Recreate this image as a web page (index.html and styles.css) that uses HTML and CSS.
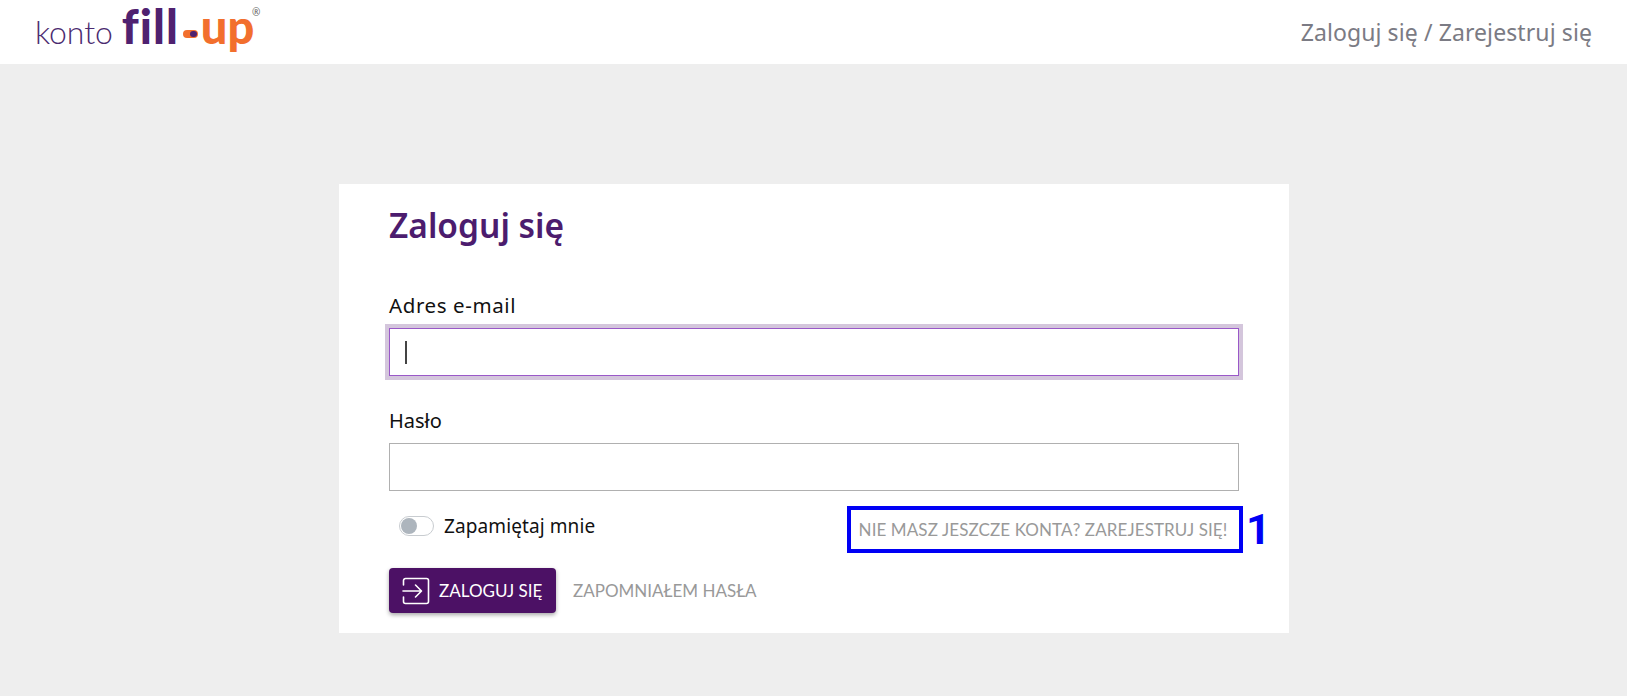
FILE: index.html
```html
<!DOCTYPE html>
<html lang="pl">
<head>
<meta charset="utf-8">
<title>Zaloguj się</title>
<link rel="stylesheet" href="styles.css">
</head>
<body>
<header class="topbar">
  <a class="logo">
    <span class="logo-konto">konto</span>
    <span class="logo-fill">fill</span>
    <span class="logo-dash"><i class="logo-dot"></i></span>
    <span class="logo-up">up</span>
    <span class="logo-reg">®</span>
  </a>
  <a class="top-link">Zaloguj się / Zarejestruj się</a>
</header>
<main class="page">
  <section class="card">
    <h1 class="title">Zaloguj się</h1>
    <label class="label label-email">Adres e-mail</label>
    <div class="input input-focus"><span class="caret"></span></div>
    <label class="label label-second">Hasło</label>
    <div class="input input-second"></div>
    <div class="row-remember">
      <div class="remember">
        <span class="toggle"><span class="knob"></span></span>
        <span class="remember-text">Zapamiętaj mnie</span>
      </div>
      <div class="register-wrap">
        <a class="register">NIE MASZ JESZCZE KONTA? ZAREJESTRUJ SIĘ!</a>
        <span class="marker">1</span>
      </div>
    </div>
    <div class="row-actions">
      <button class="btn">
        <svg class="btn-icon" viewBox="0 0 28 28" fill="none" stroke="#fff" stroke-width="1.6" stroke-linecap="round" stroke-linejoin="round">
          <path d="M1.5 8V3.5a2 2 0 0 1 2-2h21a2 2 0 0 1 2 2v21a2 2 0 0 1-2 2h-21a2 2 0 0 1-2-2V20"/>
          <path d="M1 14h18M13.5 8l6 6-6 6"/>
        </svg>
        <span>ZALOGUJ SIĘ</span>
      </button>
      <a class="forgot">ZAPOMNIAŁEM HASŁA</a>
    </div>
  </section>
</main>
</body>
</html>
```
FILE: styles.css
```css
* { box-sizing: border-box; }
html, body { margin: 0; height: 100%; }
body { background: #eee; font-family: "Noto Sans", "Open Sans", sans-serif; color: #111; overflow: hidden; }
.topbar { height: 64px; background: #fff; display: flex; align-items: center; justify-content: space-between; padding: 0 35px 0 35px; }
.logo { display: flex; align-items: baseline; position: relative; height: 64px; padding-top: 6px; font-variant-ligatures: none; }
.logo-konto { font-family: "Lato", sans-serif; font-weight: 300; font-size: 32px; letter-spacing: -0.1px; color: #4b2a70; margin-right: 9px; }
.logo-fill { font-family: "Lato", sans-serif; font-weight: 900; font-size: 47px; line-height: 40px; color: #4f2170; letter-spacing: 1px; }
.logo-dash { display: inline-block; width: 15px; height: 8px; border-radius: 4px; background: #f26f2d; margin: 0 3px 0 4px; align-self: center; position: relative; top: -1px; }
.logo-dot { display: block; width: 7px; height: 6px; border-radius: 3px; background: #4f2170; margin: 1px 0 0 7px; }
.logo-up { font-family: "Lato", sans-serif; font-weight: 900; font-size: 47px; line-height: 40px; color: #f26f2d; }
.logo-reg { position: absolute; left: 217px; top: 7px; font-size: 10px; line-height: 10px; color: #666; }
.top-link { font-size: 23px; letter-spacing: 0.1px; color: #7b7b84; }
.page { display: flex; justify-content: center; padding-top: 120px; padding-left: 1px; }
.card { width: 950px; height: 449px; background: #fff; padding: 19px 50px 0 50px; }
.title { margin: 0; font-size: 33.5px; font-weight: 600; line-height: 44px; color: #4c1c6e; }
.label { display: block; font-size: 20px; line-height: 26px; }
.label-email { margin-top: 45px; font-size: 20.5px; letter-spacing: 0.6px; }
.label-second { margin-top: 32px; }
.input { height: 48px; margin-top: 10px; border: 1px solid #b0b0b0; background: #fff; display: flex; align-items: center; padding-left: 15px; }
.input-second { margin-top: 9px; }
.input-focus { border-color: #9a58c8; box-shadow: 0 0 0 4px #d4c6dc; }
.caret { width: 2px; height: 23px; background: #444; }
.row-remember { display: flex; justify-content: space-between; margin-top: 15px; height: 47px; }
.remember { display: flex; align-items: center; gap: 10px; padding-left: 10px; height: 40px; }
.toggle { width: 35px; height: 20px; border: 1px solid #c8ccd0; border-radius: 10px; display: block; padding: 1px; }
.knob { display: block; width: 16px; height: 16px; border-radius: 50%; background: #adb5bd; }
.remember-text { font-size: 19px; letter-spacing: 0.1px; }
.register-wrap { position: relative; margin-right: -4px; }
.register { display: block; width: 396px; height: 47px; padding-right: 4px; border: 4px solid #0000f5; color: #999; font-family: "Lato", sans-serif; font-size: 17px; letter-spacing: 0.1px; line-height: 39px; text-align: center; white-space: nowrap; }
.marker { position: absolute; left: 399px; top: 0; font-family: "Roboto", sans-serif; font-weight: 700; font-size: 43px; line-height: 47px; color: #0000f5; }
.row-actions { display: flex; align-items: center; gap: 17px; margin-top: 15px; }
.btn { width: 167px; height: 45px; background: #4c1165; border: 0; border-radius: 4px; box-shadow: 0 2px 4px rgba(0,0,0,.35); color: #fff; display: flex; align-items: center; gap: 9px; padding: 0 0 0 13px; font-family: "Lato", sans-serif; font-size: 17px; }
.btn-icon { width: 28px; height: 28px; flex: none; }
.forgot { color: #999; font-family: "Lato", sans-serif; font-size: 17px; }
```
